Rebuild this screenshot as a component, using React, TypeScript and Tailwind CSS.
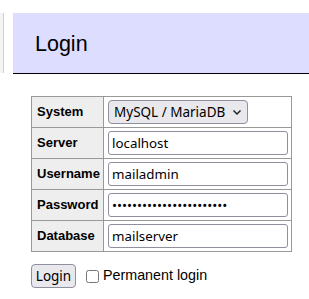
import { useState } from "react";

const fields = [
  { label: "Server", name: "server", type: "text", value: "localhost" },
  { label: "Username", name: "username", type: "text", value: "mailadmin" },
  { label: "Password", name: "password", type: "password", value: "xxxxxxxxxxxxxxxxxxxxxxx" },
  { label: "Database", name: "db", type: "text", value: "mailserver" },
];

const control =
  "h-[24px] rounded-[3px] border border-[#8f8f9d] bg-white px-[3px] text-[13.33px] text-black font-['Noto_Sans',sans-serif] outline-none";

export default function App() {
  const [permanent, setPermanent] = useState(false);

  return (
    <div className="min-h-[299px] bg-white font-['Liberation_Sans',Arial,sans-serif] text-black">
      <div className="flex pt-[13px]">
        <div className="h-[60px] w-[4px] border-r border-[#cfcfcf] bg-[#f4f4f4]" aria-hidden="true" />
        <h2 className="ml-[9px] flex h-[61px] flex-1 items-center border-b border-black bg-[#ddf] pl-[22px] pt-[2px] text-[21.5px] font-normal">
          Login
        </h2>
      </div>

      <form className="ml-[31px] mt-[22px]">
        <table className="border-collapse border border-[#999]">
          <tbody>
            <tr>
              <th className="w-[72px] border border-[#999] bg-[#eee] pl-[5px] text-left text-[13px] font-bold">
                System
              </th>
              <td className="border border-[#999] py-[3px] pl-[4px] pr-[3px]">
                <div className="relative w-[140px]">
                  <select
                    defaultValue="server"
                    className="h-[24px] w-full appearance-none rounded-[4px] border border-[#8f8f9d] bg-[#e9e9ed] pl-[5px] text-[13.5px] text-black font-['Noto_Sans',sans-serif] outline-none"
                  >
                    <option value="server">MySQL / MariaDB</option>
                    <option value="sqlite">SQLite</option>
                    <option value="pgsql">PostgreSQL</option>
                  </select>
                  <svg
                    className="pointer-events-none absolute right-[6px] top-[9px]"
                    width="10"
                    height="7"
                    viewBox="0 0 10 7"
                    fill="none"
                    aria-hidden="true"
                  >
                    <path d="M1.5 1.5 L5 5 L8.5 1.5" stroke="#222" strokeWidth="1.5" />
                  </svg>
                </div>
              </td>
            </tr>
            {fields.map((f) => (
              <tr key={f.name}>
                <th className="border border-[#999] bg-[#eee] pl-[5px] text-left text-[13px] font-bold">
                  {f.label}
                </th>
                <td className="border border-[#999] py-[3px] pl-[4px] pr-[3px]">
                  <input
                    type={f.type}
                    name={f.name}
                    defaultValue={f.value}
                    className={`${control} block w-[180px]`}
                  />
                </td>
              </tr>
            ))}
          </tbody>
        </table>

        <div className="mt-[12px] flex items-center">
          <button
            type="button"
            className="h-[24px] w-[45px] rounded-[4px] border border-[#8f8f9d] bg-[#e9e9ed] text-[13.5px] font-['Noto_Sans',sans-serif] text-black"
          >
            Login
          </button>
          <label className="ml-[10px] flex items-center text-[14.3px]">
            <input
              type="checkbox"
              checked={permanent}
              onChange={(e) => setPermanent(e.target.checked)}
              className="m-0 mr-[4px] h-[13px] w-[13px]"
            />
            Permanent login
          </label>
        </div>
      </form>
    </div>
  );
}
